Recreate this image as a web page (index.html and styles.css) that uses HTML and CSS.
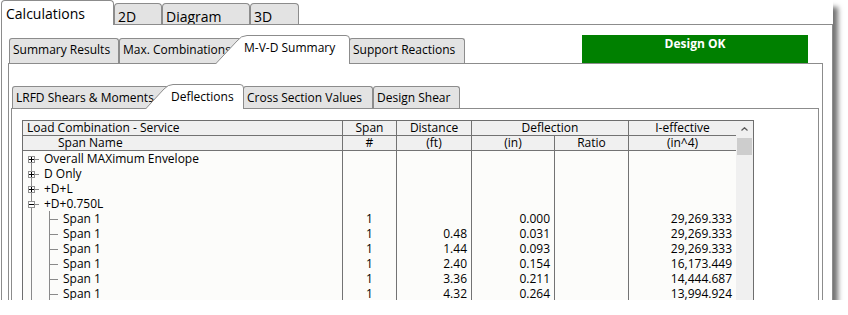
FILE: index.html
```html
<!DOCTYPE html>
<html lang="en">
<head>
    <meta charset="UTF-8">
    <title>Calculations - Deflections</title>
    <link rel="stylesheet" href="styles.css">
</head>
<body>
    <div class="window">
        <div class="main-tabs">
            <div class="main-tab active t-calc">Calculations</div>
            <div class="main-tab t-2d">2D</div>
            <div class="main-tab t-diagram">Diagram</div>
            <div class="main-tab t-3d">3D</div>
        </div>

        <div class="pane pane-main">
            <div class="tabs tabs-sub">
                <div class="tab t-summary">Summary Results</div>
                <div class="tab t-maxcomb">Max. Combinations</div>
                <div class="tab active t-mvd">
                    <svg class="tab-shape" width="135" height="29" viewBox="0 0 135 29"><path d="M0.5 29L22 6Q26 0.5 32 0.5H131Q134.5 0.5 134.5 4V29" fill="#fff" stroke="#8c8c8c"/></svg>
                    <span class="tab-text">M-V-D Summary</span>
                </div>
                <div class="tab t-support">Support Reactions</div>
                <div class="status">Design OK</div>
            </div>

            <div class="pane pane-sub">
                <div class="tabs tabs-inner">
                    <div class="tab t-lrfd">LRFD Shears &amp; Moments</div>
                    <div class="tab active t-defl">
                        <svg class="tab-shape" width="99" height="25" viewBox="0 0 99 25"><path d="M0.5 25L19 5Q23 0.5 28 0.5H95Q98.5 0.5 98.5 4V25" fill="#fff" stroke="#8c8c8c"/></svg>
                        <span class="tab-text">Deflections</span>
                    </div>
                    <div class="tab t-cross">Cross Section Values</div>
                    <div class="tab t-shear">Design Shear</div>
                </div>

                <div class="pane pane-inner">
                    <div class="grid">
                        <table class="results">
                            <colgroup>
                                <col class="c-name">
                                <col class="c-span">
                                <col class="c-dist">
                                <col class="c-in">
                                <col class="c-ratio">
                                <col class="c-ieff">
                            </colgroup>
                            <thead>
                                <tr>
                                    <th class="h-left">Load Combination - Service</th>
                                    <th>Span</th>
                                    <th>Distance</th>
                                    <th colspan="2">Deflection</th>
                                    <th class="last">I-effective</th>
                                </tr>
                                <tr>
                                    <th class="h-indent">Span Name</th>
                                    <th>#</th>
                                    <th>(ft)</th>
                                    <th>(in)</th>
                                    <th>Ratio</th>
                                    <th class="last">(in^4)</th>
                                </tr>
                            </thead>
                            <tbody>
                                <tr>
                                    <td><div class="node root first"><svg class="expander" viewBox="0 0 7 7"><rect x=".5" y=".5" width="6" height="6" fill="#fff" stroke="#919191"/><path d="M1 3.5h5M3.5 1v5" stroke="#000"/></svg><span class="stub"></span><span class="label">Overall MAXimum Envelope</span></div></td>
                                    <td></td><td></td><td></td><td></td><td class="last"></td>
                                </tr>
                                <tr>
                                    <td><div class="node root"><svg class="expander" viewBox="0 0 7 7"><rect x=".5" y=".5" width="6" height="6" fill="#fff" stroke="#919191"/><path d="M1 3.5h5M3.5 1v5" stroke="#000"/></svg><span class="stub"></span><span class="label">D Only</span></div></td>
                                    <td></td><td></td><td></td><td></td><td class="last"></td>
                                </tr>
                                <tr>
                                    <td><div class="node root"><svg class="expander" viewBox="0 0 7 7"><rect x=".5" y=".5" width="6" height="6" fill="#fff" stroke="#919191"/><path d="M1 3.5h5M3.5 1v5" stroke="#000"/></svg><span class="stub"></span><span class="label">+D+L</span></div></td>
                                    <td></td><td></td><td></td><td></td><td class="last"></td>
                                </tr>
                                <tr>
                                    <td><div class="node root"><svg class="expander" viewBox="0 0 7 7"><rect x=".5" y=".5" width="6" height="6" fill="#fff" stroke="#919191"/><path d="M1 3.5h5" stroke="#000"/></svg><span class="stub"></span><span class="label">+D+0.750L</span></div></td>
                                    <td></td><td></td><td></td><td></td><td class="last"></td>
                                </tr>
                                <tr>
                                    <td><div class="node child"><span class="stub"></span><span class="label">Span 1</span></div></td>
                                    <td class="mid">1</td><td class="num"></td><td class="num">0.000</td><td></td><td class="num last">29,269.333</td>
                                </tr>
                                <tr>
                                    <td><div class="node child"><span class="stub"></span><span class="label">Span 1</span></div></td>
                                    <td class="mid">1</td><td class="num">0.48</td><td class="num">0.031</td><td></td><td class="num last">29,269.333</td>
                                </tr>
                                <tr>
                                    <td><div class="node child"><span class="stub"></span><span class="label">Span 1</span></div></td>
                                    <td class="mid">1</td><td class="num">1.44</td><td class="num">0.093</td><td></td><td class="num last">29,269.333</td>
                                </tr>
                                <tr>
                                    <td><div class="node child"><span class="stub"></span><span class="label">Span 1</span></div></td>
                                    <td class="mid">1</td><td class="num">2.40</td><td class="num">0.154</td><td></td><td class="num last">16,173.449</td>
                                </tr>
                                <tr>
                                    <td><div class="node child"><span class="stub"></span><span class="label">Span 1</span></div></td>
                                    <td class="mid">1</td><td class="num">3.36</td><td class="num">0.211</td><td></td><td class="num last">14,444.687</td>
                                </tr>
                                <tr>
                                    <td><div class="node child"><span class="stub"></span><span class="label">Span 1</span></div></td>
                                    <td class="mid">1</td><td class="num">4.32</td><td class="num">0.264</td><td></td><td class="num last">13,994.924</td>
                                </tr>
                            </tbody>
                        </table>
                        <div class="scrollbar">
                            <div class="scroll-up"><svg width="7" height="4" viewBox="0 0 7 4"><path d="M0.5 3.5L3.5 0.7L6.5 3.5" fill="none" stroke="#5a5a5a" stroke-width="1.2"/></svg></div>
                            <div class="scroll-thumb"></div>
                        </div>
                    </div>
                </div>
            </div>
        </div>
    </div>
</body>
</html>
```

FILE: styles.css
```css
body { margin: 0; background: #fff; font-family: "Open Sans", "Noto Sans", sans-serif; font-size: 12px; color: #000; }

.window { width: 833px; height: 300px; box-sizing: border-box; padding-left: 1px; background: #fff; overflow: hidden; box-shadow: 6px 6px 5px -1px rgba(0, 0, 0, 0.55); }

/* top level tabs */
.main-tabs { display: flex; align-items: flex-end; height: 24px; }
.main-tab { box-sizing: border-box; height: 21px; padding: 4px 0 0 3px; border: 1px solid #8c8c8c; border-bottom: none; border-radius: 4px 4px 0 0; background: #e3e3e3; font-size: 14px; line-height: 18px; white-space: nowrap; overflow: hidden; }
.main-tab.active { position: relative; z-index: 1; height: 25px; margin-bottom: -1px; padding: 4px 0 0 4px; background: #fff; }
.t-calc { width: 113px; }
.t-2d { width: 48px; }
.t-diagram { width: 88px; }
.t-3d { width: 49px; }

/* panes */
.pane { border: 1px solid #8c8c8c; border-bottom: none; }
.pane-sub { margin: 0 9px 0 6px; }
.pane-inner { margin: 0 3px 0 2px; }

/* sub tabs */
.tabs { display: flex; align-items: flex-end; }
.tabs-sub { height: 28px; margin-top: 10px; padding-left: 7px; }
.tabs-inner { height: 24px; margin-top: 20px; padding-left: 3px; }
.tab { box-sizing: border-box; height: 25px; padding: 3px 0 0 3px; border: 1px solid #8c8c8c; border-bottom: none; border-radius: 3px 3px 0 0; background: #e3e3e3; line-height: 16px; white-space: nowrap; overflow: hidden; }
.tabs-inner .tab { height: 22px; padding-top: 3px; }
.tab.active { position: relative; z-index: 1; margin-bottom: -1px; border: none; background: none; overflow: visible; }
.tab-shape { position: absolute; left: 0; top: 0; }
.tab-text { position: relative; }

.t-summary { width: 110px; }
.t-maxcomb { width: 126px; }
.t-mvd { width: 135px; height: 29px; margin-left: -30px; padding: 5px 0 0 29px; }
.t-support { width: 116px; margin-left: -1px; }
.tabs-inner .t-defl { width: 99px; height: 25px; margin-left: -27px; padding: 5px 0 0 26px; }
.t-lrfd { width: 160px; }
.t-cross { width: 130px; margin-left: -1px; }
.t-shear { width: 87px; }

.status { align-self: flex-start; width: 226px; height: 28px; box-sizing: border-box; margin: 0 24px 0 auto; padding-top: 1px; background: #008000; color: #fff; font-weight: bold; text-align: center; line-height: 16px; }

/* grid */
.grid { display: flex; width: 732px; height: 200px; box-sizing: border-box; margin: 11px 0 0 10px; border: 1px solid #6e6e6e; border-bottom: none; background: #fcfcfa; }
.results { width: 713px; table-layout: fixed; border-collapse: separate; border-spacing: 0; align-self: flex-start; }
.c-name { width: 320px; }
.c-span { width: 54px; }
.c-dist { width: 75px; }
.c-in { width: 83px; }
.c-ratio { width: 74px; }
.c-ieff { width: 107px; }

.results th { box-sizing: border-box; height: 15px; padding: 0; border-right: 1px solid #737373; border-bottom: 1px solid #737373; background: #f0f0f0; font-weight: normal; line-height: 14px; white-space: nowrap; }
.results th.h-left { text-align: left; padding-left: 4px; }
.results th.h-indent { text-align: left; padding-left: 35px; }
.results td { box-sizing: border-box; height: 15px; padding: 0; border-right: 1px solid #737373; line-height: 15px; white-space: nowrap; }
.results .last { border-right: none; }
.results td.mid { text-align: center; }
.results td.num { text-align: right; padding-right: 4px; }

/* tree */
.node { display: flex; height: 15px; }
.root { padding-left: 5px; background: linear-gradient(#8a8a8a, #8a8a8a) 8px 0 / 1px 100% no-repeat; }
.root.first { background-position: 8px 12px; }
.child { padding-left: 26px; background: linear-gradient(#8a8a8a, #8a8a8a) 8px 0 / 1px 100% no-repeat, linear-gradient(#8a8a8a, #8a8a8a) 26px 0 / 1px 100% no-repeat; }
.expander { flex: none; width: 7px; height: 7px; margin-top: 5px; }
.stub { flex: none; width: 4px; height: 1px; margin-top: 8px; background: #8a8a8a; }
.child .stub { width: 9px; }
.label { margin-left: 5px; }

/* scrollbar */
.scrollbar { width: 17px; background: #f0f0f0; }
.scroll-up { display: flex; align-items: center; justify-content: center; height: 16px; }
.scroll-thumb { height: 17px; margin: 1px 1px 0; background: #cdcdcd; }
```
